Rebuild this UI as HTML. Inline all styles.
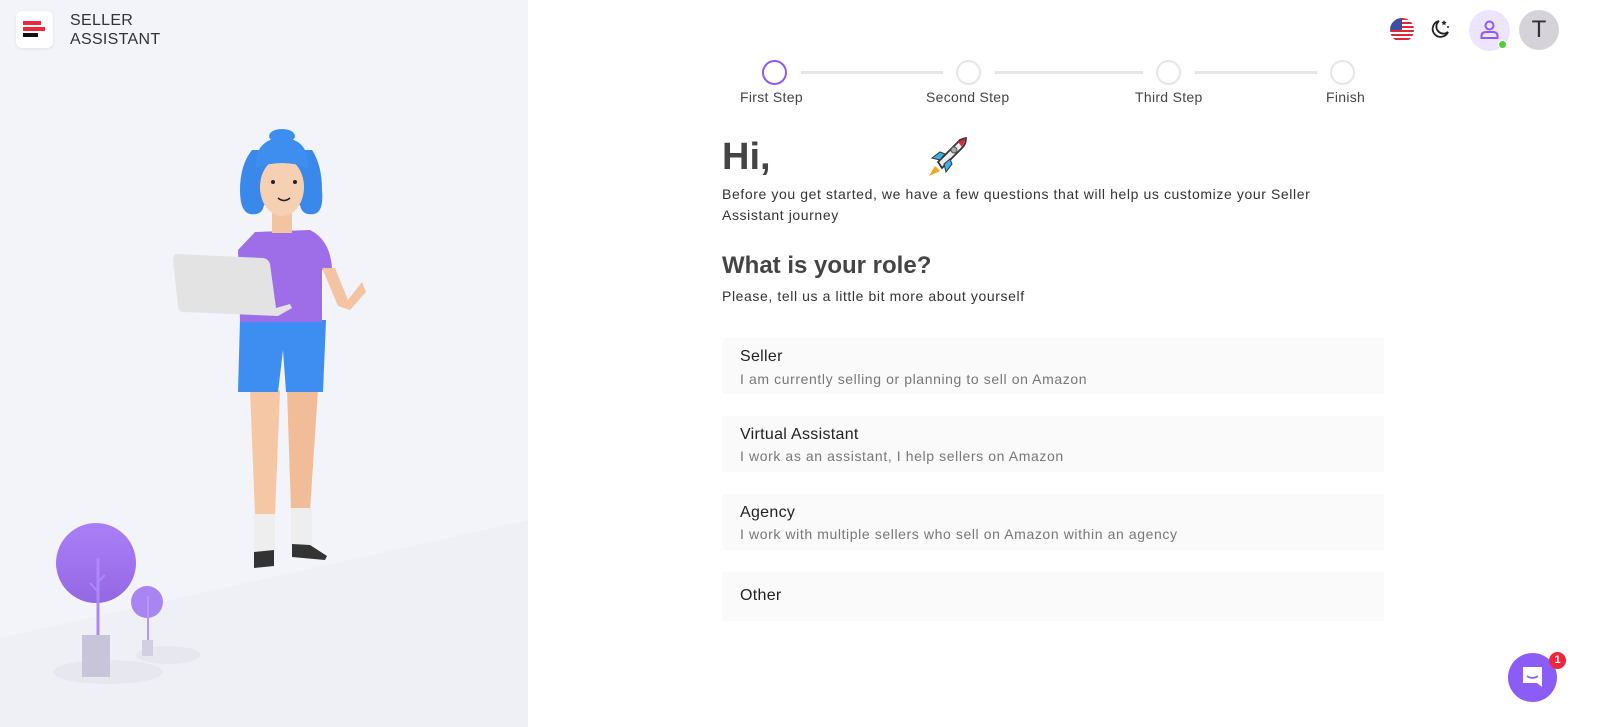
<!DOCTYPE html>
<html><head><meta charset="utf-8">
<style>
*{margin:0;padding:0;box-sizing:border-box}
body{width:1600px;height:727px;overflow:hidden;background:#fff;font-family:"Liberation Sans",sans-serif;color:#333;position:relative}
.left{position:absolute;left:0;top:0;width:528px;height:727px;background:#f2f4fa;overflow:hidden}
.logo{position:absolute;left:16px;top:11px;width:37px;height:37px;background:#fff;border-radius:6px;box-shadow:0 1px 3px rgba(0,0,0,.08)}
.logo i{position:absolute;left:7px;height:4px;display:block}
.brand{position:absolute;left:70px;top:11px;font-size:16px;line-height:19px;color:#333;letter-spacing:.3px}
.step{position:absolute;width:25px;height:25px;border-radius:50%;border:2px solid #e6e6e6;top:60px;background:#fff}
.line{position:absolute;height:3px;background:#e6e6e6;top:71px}
.lbl{position:absolute;top:89px;font-size:14px;color:#444;letter-spacing:.3px}
.card{position:absolute;left:722px;width:662px;background:#fafafa}
.card b{position:absolute;left:18px;font-weight:normal;font-size:16px;color:#222;letter-spacing:.3px}
.card span{position:absolute;left:18px;font-size:14px;color:#777;letter-spacing:.6px;white-space:nowrap}
.p{letter-spacing:.6px;white-space:nowrap}
</style></head><body>
<div class="left">
<svg width="528" height="727" style="position:absolute;left:0;top:0">
<polygon points="0,638 528,520 528,727 0,727" fill="#eef0f6"/>
<ellipse cx="108" cy="672" rx="55" ry="12" fill="#e7e8ef"/>
<ellipse cx="168" cy="655" rx="32" ry="9" fill="#e7e8ef"/>
<defs><linearGradient id="tg" x1="0" y1="0" x2="0" y2="1"><stop offset="0" stop-color="#a97ff8"/><stop offset="1" stop-color="#9568e3"/></linearGradient></defs>
<circle cx="96" cy="563" r="40" fill="url(#tg)"/>
<line x1="98" y1="558" x2="98" y2="635" stroke="#ae88f7" stroke-width="3"/>
<line x1="98" y1="592" x2="90" y2="583" stroke="#ae88f7" stroke-width="2"/>
<line x1="98" y1="582" x2="105" y2="575" stroke="#ae88f7" stroke-width="2"/>
<rect x="82" y="635" width="28" height="42" fill="#c8c4d9"/>
<circle cx="147" cy="602" r="16" fill="#a985f3"/>
<line x1="148" y1="596" x2="148" y2="640" stroke="#b896f8" stroke-width="2"/>
<rect x="142" y="640" width="11" height="16" fill="#d3cfe3"/>
<path d="M250 390 L280 390 L275 515 L255 515 Z" fill="#f6c7a5"/>
<path d="M287 390 L318 390 L310 510 L291 510 Z" fill="#f1bd98"/>
<rect x="254" y="514" width="21" height="38" fill="#eeeeee"/>
<rect x="291" y="508" width="21" height="38" fill="#eeeeee"/>
<path d="M254 552 L274 550 L274 566 L254 568 Z" fill="#333"/>
<path d="M292 544 L310 545 L327 556 L325 560 L292 557 Z" fill="#333"/>
<path d="M240 320 L326 320 L323 392 L286 392 L283 350 L278 392 L238 392 Z" fill="#3d8ef0"/>
<path d="M255 232 L310 230 Q330 240 332 268 L322 270 L322 322 L240 322 L238 250 Z" fill="#9d6ee8"/>
<path d="M322 268 L335 268 L348 300 L362 282 L366 292 L350 310 L338 306 Z" fill="#f3c3a2"/>
<path d="M176 254 L262 258 Q268 258 270 264 L276 308 L290 304 L292 308 L278 316 L184 312 Q178 312 178 306 L173 260 Q174 254 176 254 Z" fill="#e3e3e3"/>
<rect x="272" y="205" width="20" height="28" fill="#f3c3a2"/>
<path d="M252 150 Q240 165 240 190 Q240 212 250 214 Q262 216 264 205 L300 205 Q302 216 314 214 Q324 212 322 190 Q322 165 312 150 Z" fill="#3a88ea"/>
<ellipse cx="282" cy="187" rx="22" ry="29" fill="#f6d0b2"/>
<path d="M256 168 Q254 140 282 137 Q310 140 308 168 Q282 158 256 168 Z" fill="#3e8ef0"/>
<ellipse cx="282" cy="136" rx="13" ry="7" fill="#3e8ef0"/>
<circle cx="273" cy="182" r="2" fill="#222"/><circle cx="295" cy="182" r="2" fill="#222"/>
<path d="M278 198 Q284 203 290 198" stroke="#222" stroke-width="1.5" fill="none"/>
</svg>
<div class="logo"><i style="top:10px;width:18px;background:#f0263a"></i><i style="top:16px;width:22px;background:#f0263a"></i><i style="top:22px;width:15px;background:#111"></i></div>
<div class="brand">SELLER<br>ASSISTANT</div>
</div>

<svg style="position:absolute;left:1389px;top:17px" width="26" height="26" viewBox="0 0 26 26"><defs><clipPath id="c"><circle cx="13" cy="13" r="12"/></clipPath></defs><g clip-path="url(#c)"><rect width="26" height="26" fill="#fff"/><g fill="#e0263a"><rect y="1" width="26" height="2"/><rect y="5" width="26" height="2"/><rect y="9" width="26" height="2"/><rect y="13" width="26" height="2"/><rect y="17" width="26" height="2"/><rect y="21" width="26" height="2"/></g><rect width="13" height="13" fill="#3a4fa0"/></g></svg>
<svg style="position:absolute;left:1428px;top:17px" width="24" height="24" viewBox="0 0 24 24" fill="none" stroke="#222" stroke-width="1.8"><path d="M11 4 A8 8 0 1 0 20 15 A7 7 0 0 1 11 4 Z"/><path d="M16 3 l.8 1.8 1.8.3-1.3 1.3.3 1.8-1.6-.9-1.6.9.3-1.8-1.3-1.3 1.8-.3z" fill="#222" stroke="none"/><circle cx="20" cy="10" r="1" fill="#222" stroke="none"/></svg>
<div style="position:absolute;left:1469px;top:10px;width:41px;height:41px;border-radius:50%;background:#ede4ff"></div>
<svg style="position:absolute;left:1479px;top:19px" width="21" height="21" viewBox="0 0 21 21" fill="none" stroke="#8b5cf6" stroke-width="2"><circle cx="10.5" cy="6.5" r="4"/><path d="M2.5 19 V17 Q2.5 13 7 13 H14 Q18.5 13 18.5 17 V19 Z"/></svg>
<div style="position:absolute;left:1498px;top:40px;width:9px;height:9px;border-radius:50%;background:#4cd137;border:1px solid #fff"></div>
<div style="position:absolute;left:1519px;top:10px;width:40px;height:40px;border-radius:50%;background:#d5d2d9;color:#333;font-size:24px;text-align:center;line-height:40px">T</div>

<div class="line" style="left:801px;width:142px"></div>
<div class="line" style="left:995px;width:148px"></div>
<div class="line" style="left:1195px;width:122px"></div>
<div class="step" style="left:762px;border-color:#8b5cf6"></div>
<div class="step" style="left:956px"></div>
<div class="step" style="left:1156px"></div>
<div class="step" style="left:1330px"></div>
<div class="lbl" style="left:740px">First Step</div>
<div class="lbl" style="left:926px">Second Step</div>
<div class="lbl" style="left:1135px">Third Step</div>
<div class="lbl" style="left:1326px">Finish</div>

<div style="position:absolute;left:722px;top:136px;font-size:38px;font-weight:bold;color:#444">Hi,</div>
<svg style="position:absolute;left:926px;top:136px" width="42" height="42" viewBox="0 0 42 42"><path d="M9 30 L3 40 L14 35 Z" fill="#f7a21b"/><path d="M12 26 L34 4 Q39 2 40 2 Q40 8 36 12 L16 32 Z" fill="#ececec" stroke="#333" stroke-width="1.8"/><path d="M32 6 L40 2 L36 11 Z" fill="#e0263a"/><path d="M14 24 L6 22 L14 16 L19 18 Z" fill="#3bb0e8" stroke="#333" stroke-width="1"/><path d="M18 28 L20 36 L26 28 L24 23 Z" fill="#3bb0e8" stroke="#333" stroke-width="1"/><circle cx="28" cy="14" r="3" fill="#aaa" stroke="#555" stroke-width="1"/></svg>
<div class="p" style="position:absolute;left:722px;top:184px;font-size:14px;line-height:21px;color:#333">Before you get started, we have a few questions that will help us customize your Seller<br>Assistant journey</div>
<div style="position:absolute;left:722px;top:252px;font-size:24px;font-weight:bold;color:#444">What is your role?</div>
<div class="p" style="position:absolute;left:722px;top:288px;font-size:14px;color:#333">Please, tell us a little bit more about yourself</div>

<div class="card" style="top:338px;height:56px"><b style="top:10px">Seller</b><span style="top:33px">I am currently selling or planning to sell on Amazon</span></div>
<div class="card" style="top:416px;height:56px"><b style="top:10px">Virtual Assistant</b><span style="top:32px">I work as an assistant, I help sellers on Amazon</span></div>
<div class="card" style="top:494px;height:56px"><b style="top:10px">Agency</b><span style="top:32px">I work with multiple sellers who sell on Amazon within an agency</span></div>
<div class="card" style="top:572px;height:49px"><b style="top:15px">Other</b></div>

<div style="position:absolute;left:1508px;top:653px;width:49px;height:49px;border-radius:50%;background:#8b5cf6"></div>
<svg style="position:absolute;left:1520px;top:665px" width="25" height="25" viewBox="0 0 25 25"><path d="M3 2 H22 V22 L17 18 H3 Z" fill="#fff"/><path d="M7 11 Q12.5 15 18 11" stroke="#8b5cf6" stroke-width="1.6" fill="none"/></svg>
<div style="position:absolute;left:1549px;top:652px;width:17px;height:17px;border-radius:50%;background:#f0263a;color:#fff;font-size:11px;font-weight:bold;text-align:center;line-height:17px">1</div>
</body></html>
